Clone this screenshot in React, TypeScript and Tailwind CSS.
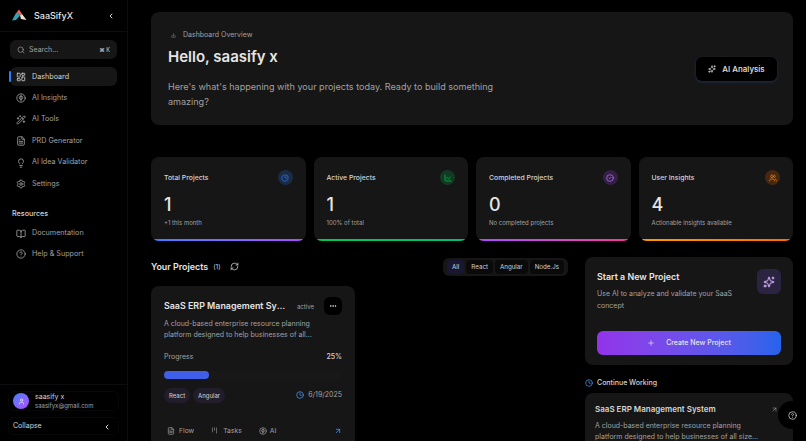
import { BookOpen, ChartLine, ChevronLeft, CircleCheck, CircleHelp, Clock, Ellipsis, FileText, Kanban, Lightbulb, LayoutDashboard, Plus, RefreshCw, ArrowUpRight, Search, Settings, Sparkles, Users, User, WandSparkles, ChartPie, Download } from 'lucide-react'

function InsightIcon({ size = 10 }: { size?: number }) {
  return (
    <svg width={size} height={size} viewBox="0 0 24 24" fill="none" stroke="currentColor" strokeWidth="2" strokeLinecap="round">
      <circle cx="12" cy="12" r="10" />
      <path d="M12 5v14M12 8c-3-1-5 1-4 4s1 3 4 3M12 8c3-1 5 1 4 4s-1 3-4 3" />
    </svg>
  )
}

const navItems = [
  { label: 'AI Insights', icon: InsightIcon },
  { label: 'AI Tools', icon: WandSparkles },
  { label: 'PRD Generator', icon: FileText },
  { label: 'AI Idea Validator', icon: Lightbulb },
  { label: 'Settings', icon: Settings },
]

const stats = [
  { title: 'Total Projects', value: '1', note: '+1 this month', icon: ChartPie, tone: 'bg-blue-500/20 text-blue-500', bar: 'from-blue-500 to-purple-500' },
  { title: 'Active Projects', value: '1', note: '100% of total', icon: ChartLine, tone: 'bg-green-500/20 text-green-500', bar: 'from-green-500 to-emerald-500' },
  { title: 'Completed Projects', value: '0', note: 'No completed projects', icon: CircleCheck, tone: 'bg-purple-500/20 text-purple-400', bar: 'from-purple-500 to-pink-500' },
  { title: 'User Insights', value: '4', note: 'Actionable insights available', icon: Users, tone: 'bg-orange-500/20 text-orange-400', bar: 'from-amber-500 to-orange-500' },
]

function Logo() {
  return (
    <svg width="16" height="13" viewBox="0 0 16 13">
      <path d="M8 0.5 L11 5 L9 6.5 L7 4.5 L5 6 L4.5 5 Z" fill="#e8685c" />
      <path d="M4.5 5 L7 4.5 L9 6.5 L5 11 L1 11.5 Z" fill="#35a3b5" />
      <path d="M9 6.5 L11 5 L15.5 11 L10 10 Z" fill="#ece3d6" />
    </svg>
  )
}

export default function App() {
  return (
    <div className="flex h-[441px] w-[806px] overflow-hidden bg-black font-['Inter',sans-serif] text-white">
      <aside className="flex w-[128px] shrink-0 flex-col border-r border-white/5">
        <div className="flex h-[32px] items-center justify-between border-b border-white/5 pl-[11px] pr-[10px]">
          <div className="flex items-center gap-[7px]">
            <Logo />
            <span className="text-[9px] font-medium text-neutral-200">SaaSifyX</span>
          </div>
          <ChevronLeft size={8} strokeWidth={3} className="mr-[2px] text-neutral-300" />
        </div>
        <div className="mx-[10px] mt-[8px] flex h-[19px] items-center gap-[4px] rounded-md bg-[#161616] px-[7px] pt-px text-[7px] text-neutral-400">
          <Search size={8} />
          <span>Search...</span>
          <span className="ml-auto text-[5.5px] text-neutral-300">⌘ K</span>
        </div>
        <nav className="mt-[8px] flex flex-col">
          <div className="relative mx-[10px] flex h-[19px] items-center gap-[6px] rounded-md bg-[#161616] pl-[6px] pt-px text-[7.2px] text-neutral-300">
            <span className="absolute -left-px top-[4px] h-[11px] w-[1.5px] rounded bg-blue-500" />
            <LayoutDashboard size={10} />
            Dashboard
          </div>
          {navItems.map((item) => (
            <div key={item.label} className="mx-[10px] mt-[2.4px] flex h-[19px] items-center gap-[6px] pl-[6px] pt-px text-[7.2px] text-neutral-400">
              <item.icon size={10} />
              {item.label}
            </div>
          ))}
        </nav>
        <div className="ml-[12px] mt-[16px] text-[7.2px] font-medium text-neutral-300">Resources</div>
        <div className="mt-[4px] flex flex-col gap-[2px]">
          <div className="mx-[10px] flex h-[19px] items-center gap-[6px] pl-[6px] pt-px text-[7.2px] text-neutral-400">
            <BookOpen size={10} />
            Documentation
          </div>
          <div className="mx-[10px] flex h-[19px] items-center gap-[6px] pl-[6px] text-[7.2px] text-neutral-400">
            <CircleHelp size={10} />
            Help &amp; Support
          </div>
        </div>
        <div className="mt-auto border-t border-white/5 px-[8px] pb-[6px] pt-[6px]">
          <div className="flex h-[20px] items-center gap-[6px] rounded-md border border-white/[0.03] pl-[4px]">
            <div className="flex h-[16px] w-[16px] items-center justify-center rounded-full bg-gradient-to-br from-blue-500 to-purple-500">
              <User size={7} />
            </div>
            <div className="leading-none">
              <div className="text-[7px] text-neutral-300">saasify x</div>
              <div className="mt-[3px] text-[6px] text-neutral-400">saasifyx@gmail.com</div>
            </div>
          </div>
          <div className="mt-[6px] flex h-[18px] items-center justify-between rounded-md border border-white/[0.03] pl-[4px] pr-[7px] pt-px text-[7px] text-neutral-300">
            Collapse
            <ChevronLeft size={8} strokeWidth={3} />
          </div>
        </div>
      </aside>

      <main className="min-w-0 flex-1 pl-[23px] pr-[13px] pt-[12px]">
        <section className="flex h-[113px] items-center justify-between rounded-lg bg-[#161616] pl-[17px] pr-[16px]">
          <div className="w-[340px] pt-[2px]">
            <div className="flex items-center gap-[7px] pl-[3px] text-[7px] text-neutral-400">
              <Download size={5} />
              Dashboard Overview
            </div>
            <h1 className="mt-[7px] text-[15px] font-semibold leading-[20px] text-neutral-200">Hello, saasify x</h1>
            <p className="mt-[13px] text-[9.05px] leading-[14.5px] text-neutral-400">
              Here's what's happening with your projects today. Ready to build something amazing?
            </p>
          </div>
          <button className="flex h-[24px] w-[81px] items-center justify-center gap-[6px] rounded-md bg-black text-[8px] font-medium text-neutral-200 shadow-[0_1px_3px_rgba(59,130,246,0.25)]">
            <Sparkles size={8} />
            AI Analysis
          </button>
        </section>

        <section className="mt-[32px] grid h-[84px] grid-cols-4 gap-[8px]">
          {stats.map((s) => (
            <div key={s.title} className="relative overflow-hidden rounded-lg bg-[#161616] px-[13px] pt-[13px]">
              <div className="flex items-center justify-between">
                <span className="pt-px text-[6.85px] font-medium text-neutral-300">{s.title}</span>
                <span className={`flex h-[15px] w-[15px] items-center justify-center rounded-full ${s.tone}`}>
                  <s.icon size={8} />
                </span>
              </div>
              <div className="mt-[9px] text-[18px] font-medium leading-[22px] text-neutral-200">{s.value}</div>
              <div className="mt-[2px] text-[6px] text-neutral-400">{s.note}</div>
              <div className={`absolute inset-x-0 bottom-0 h-[2.5px] bg-gradient-to-r ${s.bar}`} />
            </div>
          ))}
        </section>

        <div className="mt-[16px] flex gap-[17px]">
          <div className="w-[417px] shrink-0">
            <div className="flex h-[20px] items-center justify-between">
              <div className="flex items-center">
                <span className="text-[8.9px] font-semibold text-neutral-200">Your Projects</span>
                <span className="ml-[5px] pt-px text-[6.5px] text-neutral-300">(1)</span>
                <RefreshCw size={9} className="ml-[9px] text-neutral-300" />
              </div>
              <div className="flex h-[18px] items-center gap-[2px] rounded-md bg-[#161616] px-[4px] text-[6.2px] text-neutral-300">
                <span className="flex h-[14px] items-center rounded bg-[#1a1733] px-[5px]">All</span>
                <span className="flex h-[14px] items-center rounded bg-[#0a0a0a] px-[5px]">React</span>
                <span className="flex h-[14px] items-center rounded bg-[#0a0a0a] px-[5px]">Angular</span>
                <span className="flex h-[14px] items-center rounded bg-[#0a0a0a] px-[5px]">Node.Js</span>
              </div>
            </div>
            <article className="mt-[9px] h-[170px] w-[204px] rounded-lg bg-[#161616] px-[13px] pt-[11px]">
              <div className="flex items-center">
                <h3 className="w-[123px] shrink-0 truncate text-[8.9px] font-semibold text-neutral-200">SaaS ERP Management System</h3>
                <span className="ml-[10px] text-[6px] text-neutral-400">active</span>
                <span className="ml-auto flex h-[18px] w-[18px] items-center justify-center rounded-md bg-black">
                  <Ellipsis size={8} />
                </span>
              </div>
              <p className="mt-[3px] text-[7px] leading-[11px] text-neutral-400">
                A cloud-based enterprise resource planning
                <br />
                platform designed to help businesses of all...
              </p>
              <div className="mt-[12px] flex justify-between text-[7px] text-neutral-400">
                <span>Progress</span>
                <span className="font-medium text-neutral-300">25%</span>
              </div>
              <div className="mt-[8px] h-[8px] rounded-full bg-[#181818]">
                <div className="h-full w-[25%] rounded-full bg-[#3f5fe8]" />
              </div>
              <div className="mt-[9px] flex items-center gap-[3px] text-[6px] text-neutral-300">
                <span className="flex h-[15px] items-center rounded-full bg-[#221d2b] px-[5px]">React</span>
                <span className="flex h-[15px] items-center rounded-full bg-[#221d2b] px-[5px]">Angular</span>
                <span className="ml-auto flex items-center gap-[4px] text-[7px] text-neutral-400">
                  <Clock size={8} className="text-blue-400" />
                  6/19/2025
                </span>
              </div>
              <div className="mt-[23px] flex items-center text-[6.8px] text-neutral-400">
                <span className="ml-[3px] flex items-center gap-[4px]"><FileText size={8} />Flow</span>
                <span className="ml-[17px] flex items-center gap-[5px]"><Kanban size={7} />Tasks</span>
                <span className="ml-[17px] flex items-center gap-[3px]"><InsightIcon size={8} />AI</span>
                <ArrowUpRight size={8} className="ml-auto text-blue-400" />
              </div>
            </article>
          </div>

          <div className="w-[208px] shrink-0">
            <div className="h-[108px] rounded-lg bg-[#161616] px-[12px] pt-[12px]">
              <div className="flex items-start justify-between">
                <div>
                  <h3 className="mt-[1px] text-[8.9px] font-semibold leading-[14px] text-neutral-200">Start a New Project</h3>
                  <p className="mt-[4px] w-[145px] text-[7px] leading-[11.5px] text-neutral-400">Use AI to analyze and validate your SaaS concept</p>
                </div>
                <span className="flex h-[25px] w-[24px] items-center justify-center rounded-md bg-[#2a2440] text-purple-300">
                  <Sparkles size={12} />
                </span>
              </div>
              <button className="mt-[20px] flex h-[24px] w-full items-center justify-center gap-[11px] rounded-md bg-gradient-to-r from-[#9333ea] to-[#2563eb] text-[7px] font-medium text-neutral-200">
                <Plus size={8} />
                Create New Project
              </button>
            </div>
            <div className="mt-[13px] flex h-[10px] items-center gap-[4px] text-[7px] font-medium text-neutral-300">
              <Clock size={8} className="text-blue-400" />
              Continue Working
            </div>
            <div className="mt-[5px] h-[60px] rounded-lg bg-[#161616] px-[10px] pt-[10px]">
              <div className="flex items-center justify-between">
                <h3 className="text-[8px] font-semibold leading-[12px] text-neutral-300">SaaS ERP Management System</h3>
                <ArrowUpRight size={7} className="mr-[5px] text-neutral-400" />
              </div>
              <p className="mt-[5px] text-[7px] leading-[11px] text-neutral-400">
                A cloud-based enterprise resource planning
                <br />
                platform designed to help businesses of all size...
              </p>
            </div>
          </div>
        </div>
      </main>

      <button className="absolute left-[778px] top-[401px] flex h-[28px] w-[28px] items-center justify-center rounded-full bg-black text-neutral-300">
        <CircleHelp size={9} />
      </button>
    </div>
  )
}
